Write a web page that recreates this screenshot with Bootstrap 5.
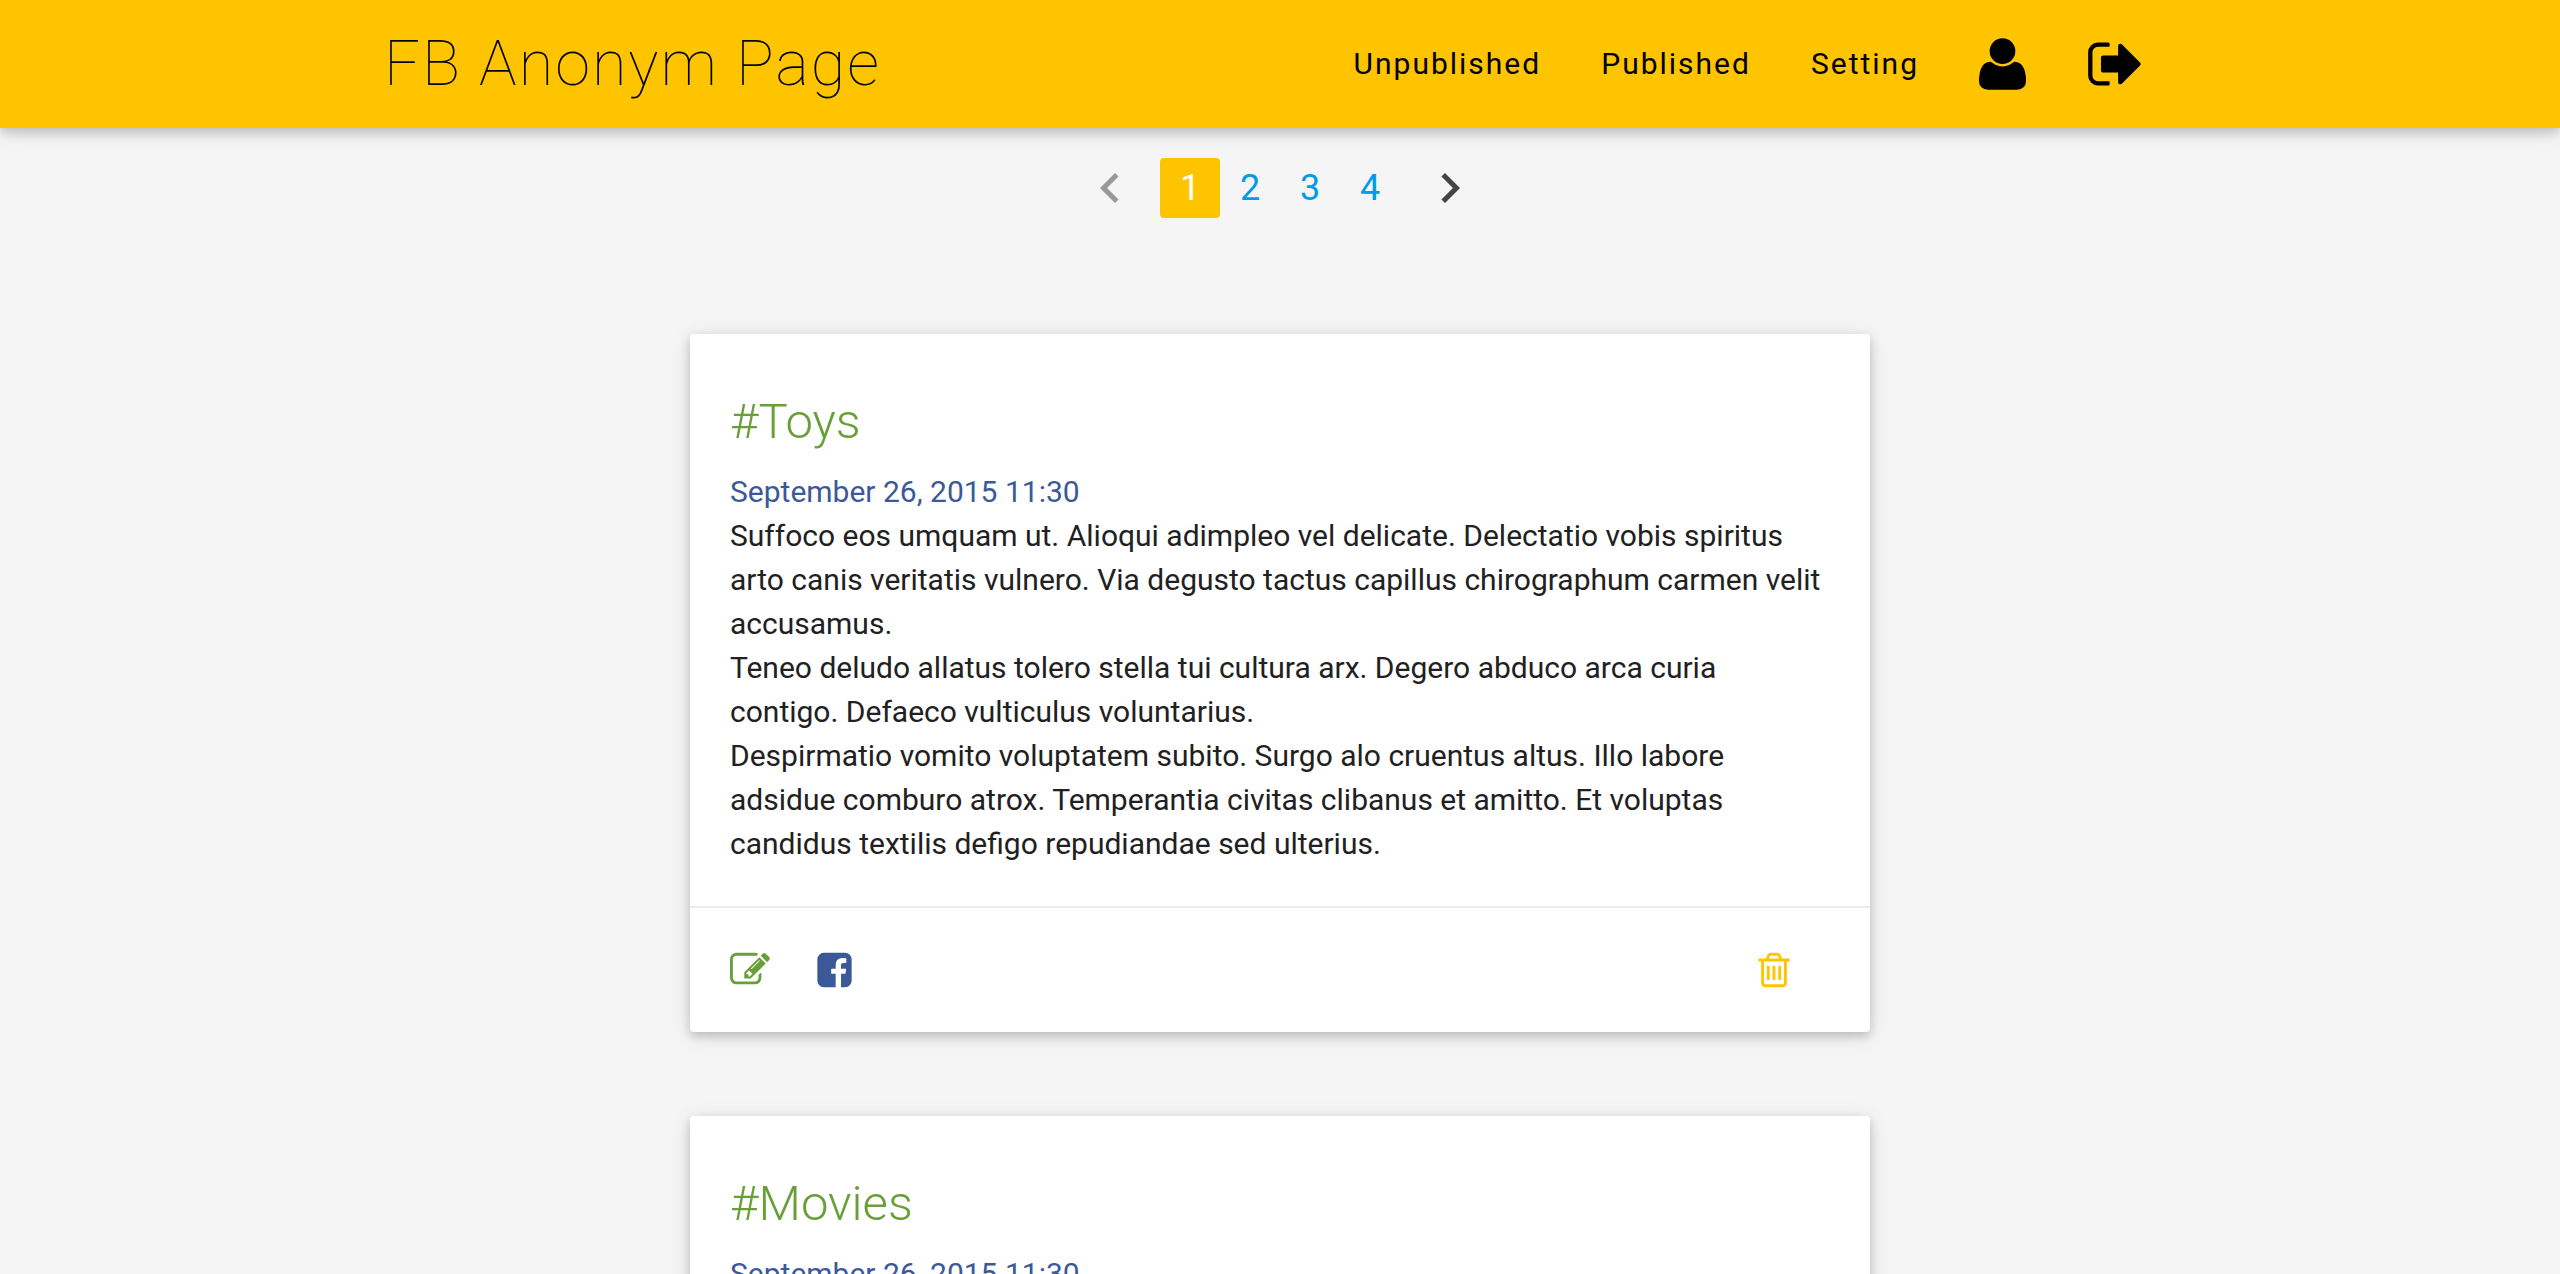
<!DOCTYPE html>
<html lang="en">
<head>
<meta charset="utf-8">
<meta name="viewport" content="width=device-width, initial-scale=1">
<title>FB Anonym Page</title>
<link href="https://cdn.jsdelivr.net/npm/bootstrap@5.3.0/dist/css/bootstrap.min.css" rel="stylesheet">
<style>
  :root { --amber: #ffc400; --leaf: #689f38; --fbblue: #3b5998; }
  body { background: #f5f5f5; color: #212121; font: 400 30px/44px Roboto, sans-serif; }
  a { text-decoration: none; }
  svg { display: block; fill: currentColor; }
  .page-wrap { width: 70%; margin: 0 auto; }
  .top-bar { background: var(--amber); padding: 0; min-height: 128px; }
  .top-bar, .post-card { box-shadow: 0 4px 10px rgba(0,0,0,.16), 0 4px 20px rgba(0,0,0,.12); }
  .top-bar a, .top-bar a:hover { color: #000; letter-spacing: 2px; }
  .site-name { font-size: 63px; font-weight: 100; line-height: 128px; white-space: nowrap; }
  .top-bar .navbar-nav .nav-link { padding: 0 30px; line-height: 60px; font-weight: 400; }
  .nav-icon svg { height: 60px; margin-right: 2px; }
  .pager { margin: 30px 0 116px; gap: 20px; }
  .pager .page-num { width: 60px; height: 60px; font-size: 36px; line-height: 60px; text-align: center; color: #039be5; border-radius: 4px; }
  .pager .page-num.active { background: var(--amber); color: #fff; }
  .pager svg { width: 60px; height: 60px; }
  .arrow-next { color: #444; }
  .arrow-prev { color: #999; }
  .post-row { --bs-gutter-x: 44px; }
  .post-card { border: 0; border-radius: 4px; margin-bottom: 84px; background: #fff; }
  .post-card .card-body { padding: 40px; }
  .post-card .card-title { margin: 0; font-size: 49px; font-weight: 300; line-height: 96px; color: var(--leaf); }
  .post-card p { margin: 0; }
  .post-date { color: var(--fbblue); display: block; }
  .post-card .card-footer { background: none; border-top: 2px solid #ebebeb; padding: 42px 40px; gap: 47px; }
  .card-footer svg { height: 40px; }
  .act-edit { color: var(--leaf); }
  .act-share { color: var(--fbblue); }
  .act-delete { color: var(--amber); margin-right: 40px; }
</style>
<script src="https://cdn.jsdelivr.net/npm/bootstrap@5.3.0/dist/js/bootstrap.bundle.min.js"></script>
</head>
<body>
<svg class="d-none" aria-hidden="true">
  <symbol id="i-edit" viewBox="0 0 1792 1792"><path d="M888 1184l116-116-152-152-116 116v56h96v96h56zm440-720q-16-16-33 1l-350 350q-17 17-1 33t33-1l350-350q17-17 1-33zm80 594v190q0 119-84.5 203.5t-203.5 84.5h-832q-119 0-203.5-84.5t-84.5-203.5v-832q0-119 84.5-203.5t203.5-84.5h832q63 0 117 25 15 7 18 23 3 17-9 29l-49 49q-14 14-32 8-23-6-45-6h-832q-66 0-113 47t-47 113v832q0 66 47 113t113 47h832q66 0 113-47t47-113v-126q0-13 9-22l64-64q15-15 35-7t20 29zm-96-738l288 288-672 672h-288v-288zm444 132l-92 92-288-288 92-92q28-28 68-28t68 28l152 152q28 28 28 68t-28 68z"/></symbol>
  <symbol id="i-fb" viewBox="128 0 1536 1792"><path d="M1376 128q119 0 203.5 84.5t84.5 203.5v960q0 119-84.5 203.5t-203.5 84.5h-188v-595h199l30-232h-229v-148q0-56 23.5-84t91.5-28l122-1v-207q-63-9-178-9-136 0-217.5 80t-81.5 226v171h-200v232h200v595h-532q-119 0-203.5-84.5t-84.5-203.5v-960q0-119 84.5-203.5t203.5-84.5h960z"/></symbol>
  <symbol id="i-trash" viewBox="192 0 1408 1792"><path d="M704 736v576q0 14-9 23t-23 9h-64q-14 0-23-9t-9-23v-576q0-14 9-23t23-9h64q14 0 23 9t9 23zm256 0v576q0 14-9 23t-23 9h-64q-14 0-23-9t-9-23v-576q0-14 9-23t23-9h64q14 0 23 9t9 23zm256 0v576q0 14-9 23t-23 9h-64q-14 0-23-9t-9-23v-576q0-14 9-23t23-9h64q14 0 23 9t9 23zm128 724v-948h-896v948q0 22 7 40.5t14.5 27 10.5 8.5h832q3 0 10.5-8.5t14.5-27 7-40.5zm-672-1076h448l-48-117q-7-9-17-11h-317q-10 2-17 11zm928 32v64q0 14-9 23t-23 9h-96v948q0 83-47 143.5t-113 60.5h-832q-66 0-113-58.5t-47-141.5v-952h-96q-14 0-23-9t-9-23v-64q0-14 9-23t23-9h309l70-167q15-37 54-63t79-26h320q40 0 79 26t54 63l70 167h309q14 0 23 9t9 23z"/></symbol>
</svg>

<nav class="navbar navbar-expand top-bar">
  <div class="page-wrap d-flex align-items-center justify-content-between">
    <a class="site-name" href="#">FB Anonym Page</a>
    <div class="navbar-nav align-items-center">
      <a class="nav-link" href="#">Unpublished</a>
      <a class="nav-link" href="#">Published</a>
      <a class="nav-link" href="#">Setting</a>
      <a class="nav-link nav-icon" href="#" aria-label="Account"><svg width="47" viewBox="192 0 1408 1792"><path d="M1600 1405q0 120-73 189.5t-194 69.5h-874q-121 0-194-69.5t-73-189.5q0-53 3.5-103.5t14-109 26.5-108.5 43-97.5 62-81 85.5-53.5 111.5-20q9 0 42 21.5t74.5 48 108 48 133.5 21.5 133.5-21.5 108-48 74.5-48 42-21.5q61 0 111.5 20t85.5 53.5 62 81 43 97.5 26.5 108.5 14 109 3.5 103.5zm-320-893q0 159-112.5 271.5t-271.5 112.5-271.5-112.5-112.5-271.5 112.5-271.5 271.5-112.5 271.5 112.5 112.5 271.5z"/></svg></a>
      <a class="nav-link nav-icon" href="#" aria-label="Sign out"><svg width="56" viewBox="64 0 1664 1792"><path d="M704 1440q0 4 1 20t.5 26.5-3 23.5-10 19.5-20.5 6.5h-320q-119 0-203.5-84.5t-84.5-203.5v-704q0-119 84.5-203.5t203.5-84.5h320q13 0 22.5 9.5t9.5 22.5q0 4 1 20t.5 26.5-3 23.5-10 19.5-20.5 6.5h-320q-66 0-113 47t-47 113v704q0 66 47 113t113 47h312l11.5 1 11.5 3 8 5.5 7 9 2 13.5zm928-544q0 26-19 45l-544 544q-19 19-45 19t-45-19-19-45v-288h-448q-26 0-45-19t-19-45v-384q0-26 19-45t45-19h448v-288q0-26 19-45t45-19 45 19l544 544q19 19 19 45z"/></svg></a>
    </div>
  </div>
</nav>

<main class="page-wrap">
  <nav class="pager d-flex justify-content-center" aria-label="Pages">
    <a class="arrow-prev" href="#" aria-label="Previous"><svg viewBox="0 0 24 24"><path d="M15.41 7.41L14 6l-6 6 6 6 1.41-1.41L10.83 12z"/></svg></a>
    <div class="d-flex">
      <a class="page-num active" href="#" aria-current="page">1</a>
      <a class="page-num" href="#">2</a>
      <a class="page-num" href="#">3</a>
      <a class="page-num" href="#">4</a>
    </div>
    <a class="arrow-next" href="#" aria-label="Next"><svg viewBox="0 0 24 24"><path d="M10 6L8.59 7.41 13.17 12l-4.58 4.59L10 18l6-6z"/></svg></a>
  </nav>

  <div class="row post-row justify-content-center">
    <div class="col-8">
      <article class="card post-card">
        <div class="card-body">
          <h2 class="card-title">#Toys</h2>
          <a class="post-date" href="#">September 26, 2015 11:30</a>
          <p>Suffoco eos umquam ut. Alioqui adimpleo vel delicate. Delectatio vobis spiritus arto canis veritatis vulnero. Via degusto tactus capillus chirographum carmen velit accusamus.</p>
          <p>Teneo deludo allatus tolero stella tui cultura arx. Degero abduco arca curia contigo. Defaeco vulticulus voluntarius.</p>
          <p>Despirmatio vomito voluptatem subito. Surgo alo cruentus altus. Illo labore adsidue comburo atrox. Temperantia civitas clibanus et amitto. Et voluptas candidus textilis defigo repudiandae sed ulterius.</p>
        </div>
        <div class="card-footer d-flex">
          <a class="act-edit" href="#" aria-label="Edit"><svg width="40"><use href="#i-edit"/></svg></a>
          <a class="act-share" href="#" aria-label="Publish to Facebook"><svg width="35"><use href="#i-fb"/></svg></a>
          <a class="act-delete ms-auto" href="#" aria-label="Delete"><svg width="32"><use href="#i-trash"/></svg></a>
        </div>
      </article>

      <article class="card post-card">
        <div class="card-body">
          <h2 class="card-title">#Movies</h2>
          <a class="post-date" href="#">September 26, 2015 11:30</a>
        </div>
      </article>
    </div>
  </div>
</main>
</body>
</html>
